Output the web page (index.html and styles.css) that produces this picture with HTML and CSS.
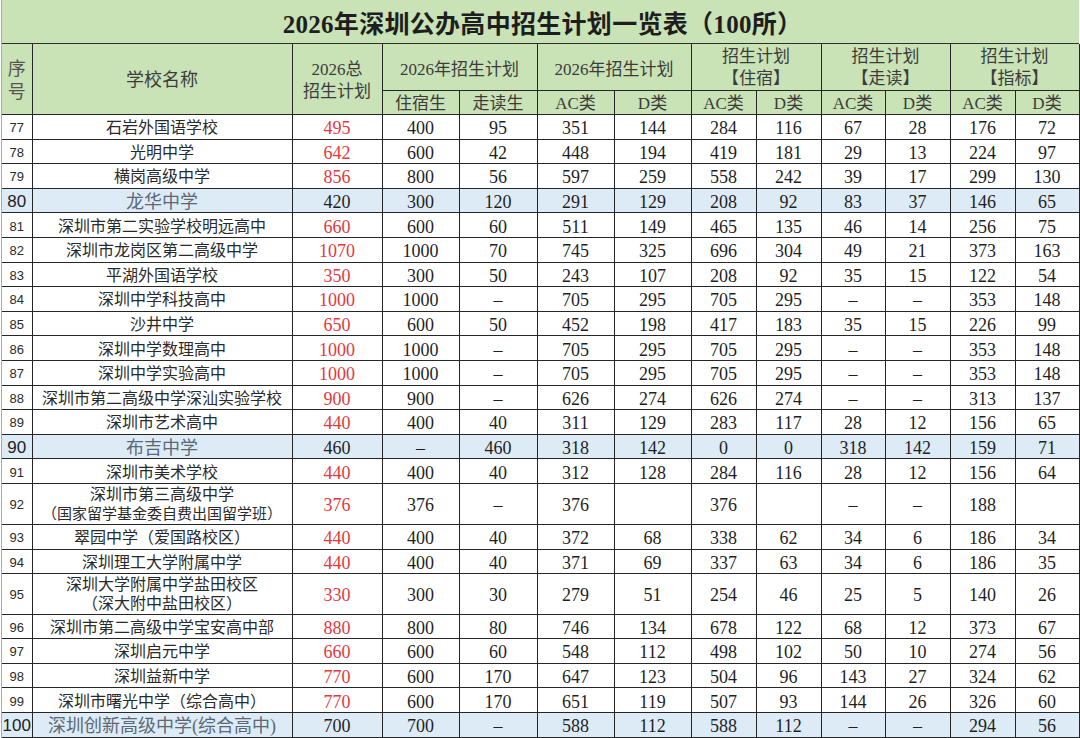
FILE: index.html
```html
<!DOCTYPE html>
<html lang="zh-CN">
<head>
<meta charset="utf-8">
<title>2026年深圳公办高中招生计划一览表</title>
<link rel="stylesheet" href="styles.css">
</head>
<body>
<div class="sheet">
  <div class="title">2026年深圳公办高中招生计划一览表（100所）</div>
  <table class="grid">
    <colgroup>
      <col class="c-no"><col class="c-name"><col class="c-total">
      <col class="c-s1"><col class="c-s2">
      <col class="c-a1"><col class="c-a2">
      <col class="c-b"><col class="c-b">
      <col class="c-c"><col class="c-b">
      <col class="c-b"><col class="c-d">
    </colgroup>
    <thead>
      <tr class="h1">
        <th rowspan="2" class="hno">序<br>号</th>
        <th rowspan="2" class="hname">学校名称</th>
        <th rowspan="2" class="htotal">2026总<br>招生计划</th>
        <th colspan="2" class="low">2026年招生计划</th>
        <th colspan="2" class="low">2026年招生计划</th>
        <th colspan="2" class="two">招生计划<br>【住宿】</th>
        <th colspan="2" class="two">招生计划<br>【走读】</th>
        <th colspan="2" class="two">招生计划<br>【指标】</th>
      </tr>
      <tr class="h2">
        <th>住宿生</th><th>走读生</th>
        <th>AC类</th><th>D类</th>
        <th>AC类</th><th>D类</th>
        <th>AC类</th><th>D类</th>
        <th>AC类</th><th>D类</th>
      </tr>
    </thead>
    <tbody>
      <tr><td class="no">77</td><td class="name">石岩外国语学校</td><td class="red">495</td><td>400</td><td>95</td><td>351</td><td>144</td><td>284</td><td>116</td><td>67</td><td>28</td><td>176</td><td>72</td></tr>
      <tr><td class="no">78</td><td class="name">光明中学</td><td class="red">642</td><td>600</td><td>42</td><td>448</td><td>194</td><td>419</td><td>181</td><td>29</td><td>13</td><td>224</td><td>97</td></tr>
      <tr><td class="no">79</td><td class="name">横岗高级中学</td><td class="red">856</td><td>800</td><td>56</td><td>597</td><td>259</td><td>558</td><td>242</td><td>39</td><td>17</td><td>299</td><td>130</td></tr>
      <tr class="hl"><td class="no">80</td><td class="name">龙华中学</td><td>420</td><td>300</td><td>120</td><td>291</td><td>129</td><td>208</td><td>92</td><td>83</td><td>37</td><td>146</td><td>65</td></tr>
      <tr><td class="no">81</td><td class="name">深圳市第二实验学校明远高中</td><td class="red">660</td><td>600</td><td>60</td><td>511</td><td>149</td><td>465</td><td>135</td><td>46</td><td>14</td><td>256</td><td>75</td></tr>
      <tr><td class="no">82</td><td class="name">深圳市龙岗区第二高级中学</td><td class="red">1070</td><td>1000</td><td>70</td><td>745</td><td>325</td><td>696</td><td>304</td><td>49</td><td>21</td><td>373</td><td>163</td></tr>
      <tr><td class="no">83</td><td class="name">平湖外国语学校</td><td class="red">350</td><td>300</td><td>50</td><td>243</td><td>107</td><td>208</td><td>92</td><td>35</td><td>15</td><td>122</td><td>54</td></tr>
      <tr><td class="no">84</td><td class="name">深圳中学科技高中</td><td class="red">1000</td><td>1000</td><td>–</td><td>705</td><td>295</td><td>705</td><td>295</td><td>–</td><td>–</td><td>353</td><td>148</td></tr>
      <tr><td class="no">85</td><td class="name">沙井中学</td><td class="red">650</td><td>600</td><td>50</td><td>452</td><td>198</td><td>417</td><td>183</td><td>35</td><td>15</td><td>226</td><td>99</td></tr>
      <tr><td class="no">86</td><td class="name">深圳中学数理高中</td><td class="red">1000</td><td>1000</td><td>–</td><td>705</td><td>295</td><td>705</td><td>295</td><td>–</td><td>–</td><td>353</td><td>148</td></tr>
      <tr><td class="no">87</td><td class="name">深圳中学实验高中</td><td class="red">1000</td><td>1000</td><td>–</td><td>705</td><td>295</td><td>705</td><td>295</td><td>–</td><td>–</td><td>353</td><td>148</td></tr>
      <tr><td class="no">88</td><td class="name">深圳市第二高级中学深汕实验学校</td><td class="red">900</td><td>900</td><td>–</td><td>626</td><td>274</td><td>626</td><td>274</td><td>–</td><td>–</td><td>313</td><td>137</td></tr>
      <tr><td class="no">89</td><td class="name">深圳市艺术高中</td><td class="red">440</td><td>400</td><td>40</td><td>311</td><td>129</td><td>283</td><td>117</td><td>28</td><td>12</td><td>156</td><td>65</td></tr>
      <tr class="hl"><td class="no">90</td><td class="name">布吉中学</td><td>460</td><td>–</td><td>460</td><td>318</td><td>142</td><td>0</td><td>0</td><td>318</td><td>142</td><td>159</td><td>71</td></tr>
      <tr><td class="no">91</td><td class="name">深圳市美术学校</td><td class="red">440</td><td>400</td><td>40</td><td>312</td><td>128</td><td>284</td><td>116</td><td>28</td><td>12</td><td>156</td><td>64</td></tr>
      <tr class="tall"><td class="no">92</td><td class="name two">深圳市第三高级中学<br><span class="sm">（国家留学基金委自费出国留学班）</span></td><td class="red">376</td><td>376</td><td>–</td><td>376</td><td></td><td>376</td><td></td><td>–</td><td>–</td><td>188</td><td></td></tr>
      <tr><td class="no">93</td><td class="name">翠园中学（爱国路校区）</td><td class="red">440</td><td>400</td><td>40</td><td>372</td><td>68</td><td>338</td><td>62</td><td>34</td><td>6</td><td>186</td><td>34</td></tr>
      <tr><td class="no">94</td><td class="name">深圳理工大学附属中学</td><td class="red">440</td><td>400</td><td>40</td><td>371</td><td>69</td><td>337</td><td>63</td><td>34</td><td>6</td><td>186</td><td>35</td></tr>
      <tr class="tall"><td class="no">95</td><td class="name two">深圳大学附属中学盐田校区<br>（深大附中盐田校区）</td><td class="red">330</td><td>300</td><td>30</td><td>279</td><td>51</td><td>254</td><td>46</td><td>25</td><td>5</td><td>140</td><td>26</td></tr>
      <tr><td class="no">96</td><td class="name">深圳市第二高级中学宝安高中部</td><td class="red">880</td><td>800</td><td>80</td><td>746</td><td>134</td><td>678</td><td>122</td><td>68</td><td>12</td><td>373</td><td>67</td></tr>
      <tr><td class="no">97</td><td class="name">深圳启元中学</td><td class="red">660</td><td>600</td><td>60</td><td>548</td><td>112</td><td>498</td><td>102</td><td>50</td><td>10</td><td>274</td><td>56</td></tr>
      <tr><td class="no">98</td><td class="name">深圳益新中学</td><td class="red">770</td><td>600</td><td>170</td><td>647</td><td>123</td><td>504</td><td>96</td><td>143</td><td>27</td><td>324</td><td>62</td></tr>
      <tr><td class="no">99</td><td class="name">深圳市曙光中学（综合高中）</td><td class="red">770</td><td>600</td><td>170</td><td>651</td><td>119</td><td>507</td><td>93</td><td>144</td><td>26</td><td>326</td><td>60</td></tr>
      <tr class="hl"><td class="no">100</td><td class="name">深圳创新高级中学(综合高中)</td><td>700</td><td>700</td><td>–</td><td>588</td><td>112</td><td>588</td><td>112</td><td>–</td><td>–</td><td>294</td><td>56</td></tr>
    </tbody>
  </table>
</div>
</body>
</html>
```

FILE: styles.css
```css
html, body {
  margin: 0;
  padding: 0;
  background: #ffffff;
}

body {
  font-family: "Liberation Serif", "Noto Sans CJK SC", serif;
  color: #222222;
}

.sheet {
  width: 1077px;
  margin-left: 1px;
  border-left: 1px solid #a9a9a9;
}

.title {
  height: 43px;
  background: #c9e2b6;
  border-bottom: 1px solid #2f2f2f;
  display: flex;
  align-items: center;
  justify-content: center;
  font-size: 25px;
  font-weight: bold;
  color: #1e1e1e;
  letter-spacing: 0.3px;
  padding-left: 4px;
}

.grid {
  border-collapse: collapse;
  table-layout: fixed;
  width: 1077px;
}

.c-no { width: 30px; }
.c-name { width: 260px; }
.c-total { width: 90px; }
.c-s1 { width: 77px; }
.c-s2 { width: 78px; }
.c-a1 { width: 77px; }
.c-a2 { width: 77px; }
.c-b { width: 65px; }
.c-c { width: 64px; }
.c-d { width: 64px; }

.grid th,
.grid td {
  border: 1px solid #262626;
  padding: 0;
  text-align: center;
  vertical-align: middle;
  white-space: nowrap;
  overflow: hidden;
}

.grid tr > :first-child {
  border-left: none;
}

.grid thead tr.h1 th {
  border-top: none;
}

.grid th {
  background: #c9e2b6;
  color: #3c3c3c;
  font-weight: normal;
  font-size: 17px;
  line-height: 22px;
}

.grid tr.h1 {
  height: 46px;
}

.grid tr.h2 {
  height: 24px;
}

.grid tr.h2 th {
  padding-top: 3px;
  line-height: 20px;
}

.grid th.hno {
  font-size: 18px;
  line-height: 23px;
  color: #555555;
  padding-top: 4px;
}

.grid th.hname {
  font-size: 18px;
  padding-top: 2px;
}

.grid th.htotal {
  padding-top: 4px;
}

.grid th.low {
  padding-top: 6px;
}

.grid th.two {
  line-height: 22px;
  padding-top: 2px;
}

.grid td {
  font-size: 18px;
  line-height: 20px;
  color: #1f1f1f;
  padding-top: 3px;
}

.grid tbody tr {
  height: 24.6px;
}

.grid tbody tr.tall {
  height: 40.5px;
}

.grid td.no {
  font-family: "Liberation Sans", "Noto Sans CJK SC", sans-serif;
  font-size: 13px;
  color: #2a2a2a;
}

.grid td.name {
  font-family: "Liberation Serif", "Noto Sans CJK SC", serif;
  font-size: 16px;
  color: #2a2a2a;
}

.grid td.name.two {
  line-height: 19px;
  padding-top: 1px;
}

.grid td.name .sm {
  font-size: 15px;
}

.grid td.red {
  color: #e4383c;
}

.grid tr.hl td {
  background: #ddebf6;
}

.grid tr.hl td.name {
  font-size: 18px;
  color: #5c6874;
}

.grid tr.hl td.no {
  font-size: 17px;
  color: #222222;
}
```
